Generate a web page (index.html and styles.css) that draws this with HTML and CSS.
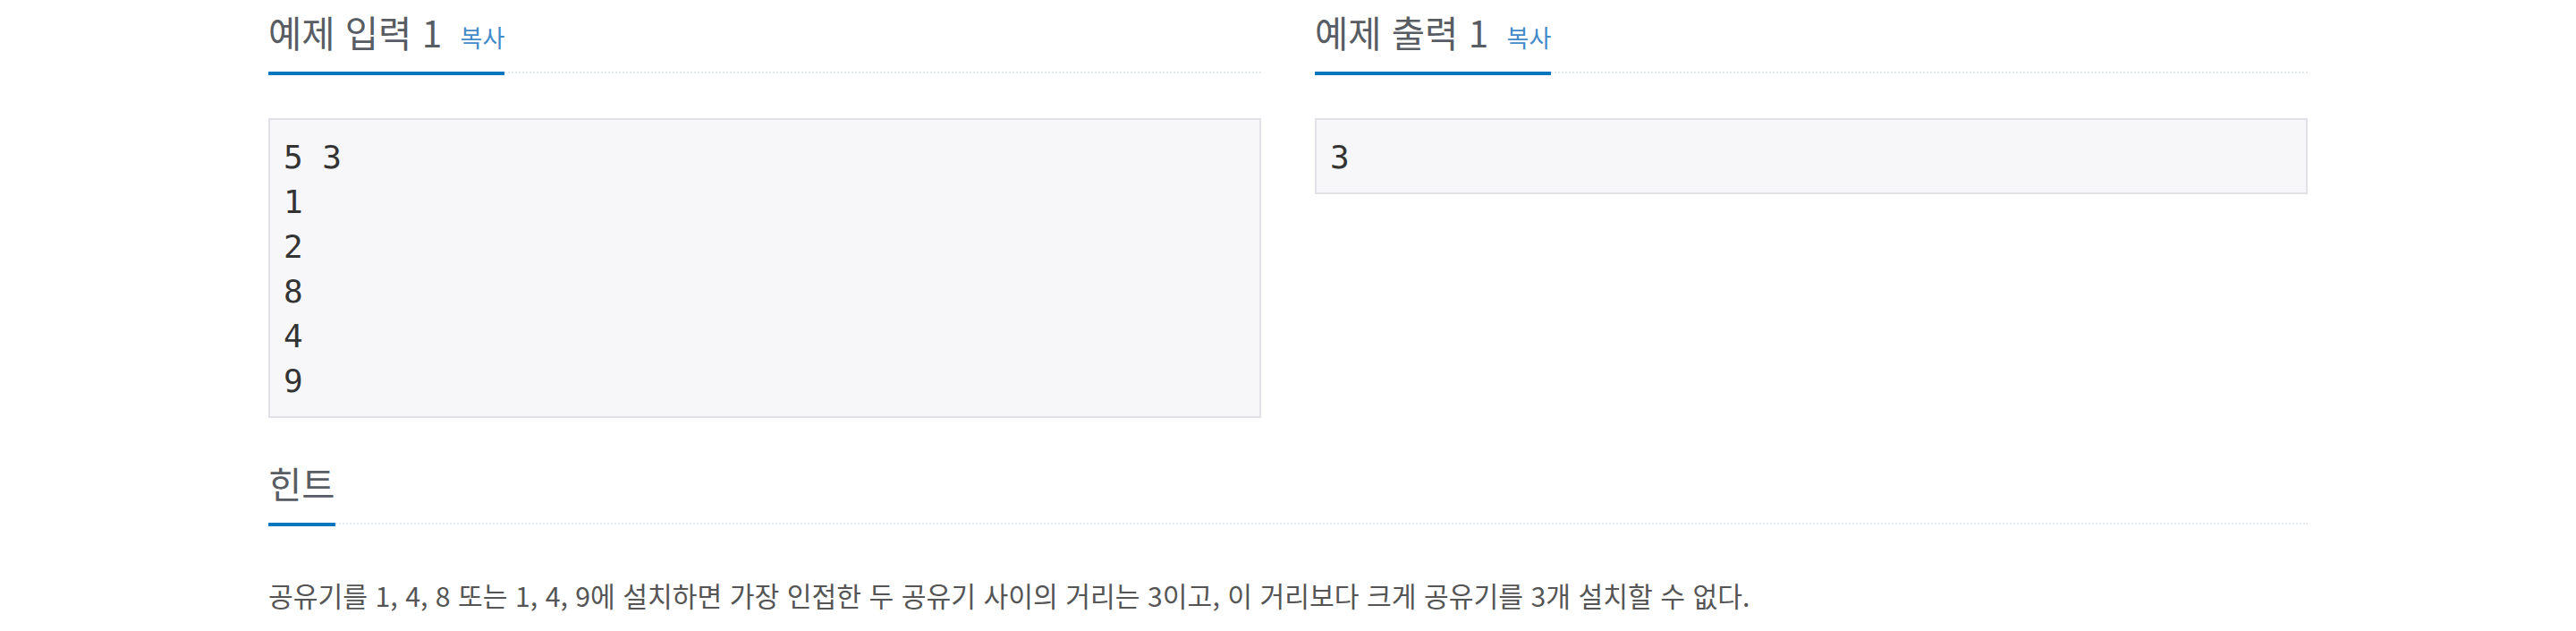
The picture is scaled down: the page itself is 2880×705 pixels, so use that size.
FILE: index.html
```html
<!DOCTYPE html>
<html lang="ko">
<head>
<meta charset="utf-8">
<title>예제</title>
<link rel="stylesheet" href="styles.css">
</head>
<body>
<main class="page">
  <div class="samples">
    <section class="sample">
      <div class="headline">
        <h2 class="headline-title">예제 입력 1 <a class="copy-link" href="#">복사</a></h2>
      </div>
      <pre class="sampledata">5 3
1
2
8
4
9</pre>
    </section>
    <section class="sample">
      <div class="headline">
        <h2 class="headline-title">예제 출력 1 <a class="copy-link" href="#">복사</a></h2>
      </div>
      <pre class="sampledata">3</pre>
    </section>
  </div>
  <section class="hint">
    <div class="headline">
      <h2 class="headline-title">힌트</h2>
    </div>
    <p class="problem-text">공유기를 1, 4, 8 또는 1, 4, 9에 설치하면 가장 인접한 두 공유기 사이의 거리는 3이고, 이 거리보다 크게 공유기를 3개 설치할 수 없다.</p>
  </section>
</main>
</body>
</html>
```
FILE: styles.css
```css
html, body {
  margin: 0;
  padding: 0;
  background: #ffffff;
}

body {
  font-family: "Noto Sans CJK KR", "Open Sans", sans-serif;
  color: #555555;
}

.page {
  width: 2280px;
  margin: 0 auto;
}

.samples {
  display: grid;
  grid-template-columns: 1fr 1fr;
  column-gap: 60px;
  align-items: start;
}

.headline {
  display: flex;
  margin: 18px 0 50px;
  border-bottom: 2px dotted #e4e9f0;
}

.headline-title {
  margin: 0 0 -4px;
  padding: 0 0 27px;
  font-size: 40.5px;
  font-weight: 400;
  line-height: 35px;
  color: #585c63;
  border-bottom: 4px solid #0076c0;
}

.copy-link {
  margin-left: 9px;
  font-size: 27px;
  line-height: 20px;
  color: #428bca;
  text-decoration: none;
}

.sampledata {
  margin: 0 0 37px;
  padding: 17px 15px 14px;
  font-family: "DejaVu Sans Mono", monospace;
  font-size: 36px;
  line-height: 50px;
  color: #333333;
  background: #f7f7f9;
  border: 2px solid #e1e1e8;
}

.problem-text {
  margin: 55px 0 0;
  font-size: 30.2px;
  line-height: 1.6;
  color: #555555;
}
```
